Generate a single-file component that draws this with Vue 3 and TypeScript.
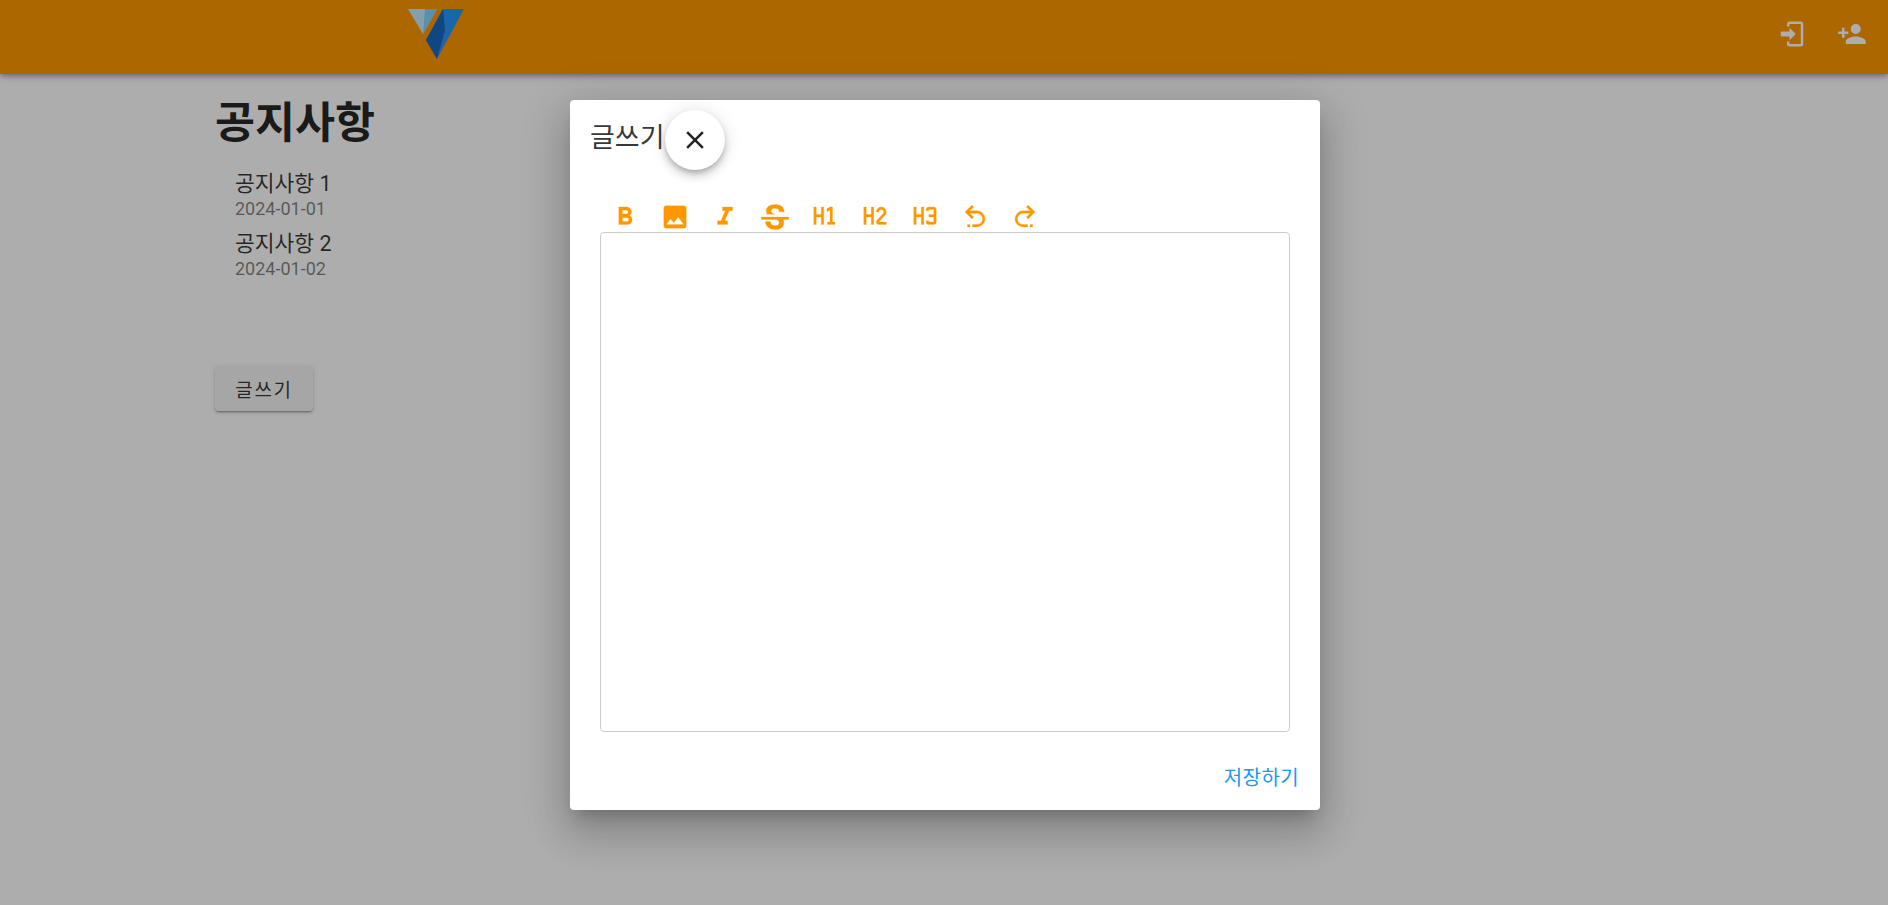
<script setup lang="ts">
interface Notice {
  title: string
  date: string
}

const notices: Notice[] = [
  { title: '공지사항 1', date: '2024-01-01' },
  { title: '공지사항 2', date: '2024-01-02' },
]

const tools: string[] = [
  'M13.5,15.5H10V12.5H13.5A1.5,1.5 0 0,1 15,14A1.5,1.5 0 0,1 13.5,15.5M10,6.5H13A1.5,1.5 0 0,1 14.5,8A1.5,1.5 0 0,1 13,9.5H10M15.6,10.79C16.57,10.11 17.25,9 17.25,8C17.25,5.74 15.5,4 13.25,4H7V18H14.04C16.14,18 17.75,16.3 17.75,14.21C17.75,12.69 16.89,11.39 15.6,10.79Z',
  'M8.5,13.5L11,16.5L14.5,12L19,18H5M21,19V5C21,3.89 20.1,3 19,3H5A2,2 0 0,0 3,5V19A2,2 0 0,0 5,21H19A2,2 0 0,0 21,19Z',
  'M10,4V7H12.21L8.79,15H6V18H14V15H11.79L15.21,7H18V4H10Z',
  'M23,12V14H18.61C19.61,16.14 19.56,22 12.38,22C4.05,22.05 4.37,15.5 4.37,15.5L8.34,15.55C8.37,18.92 11.5,18.92 12.12,18.88C12.76,18.83 15.15,18.84 15.34,16.5C15.42,15.41 14.32,14.58 13.12,14H1V12H23M19.41,7.89L15.43,7.86C15.43,7.86 15.6,5.09 12.15,5.08C8.7,5.06 9,7.28 9,7.56C9.04,7.84 9.34,9.22 12,9.88H5.71C5.71,9.88 2.22,3 10.91,2.11C19.41,1.25 19.44,7.89 19.41,7.89Z',
  'M3,4H5V10H9V4H11V18H9V12H5V18H3V4M14,18V16H16V6.31L13.5,7.75V5.44L16,4H18V16H20V18H14Z',
  'M3,4H5V10H9V4H11V18H9V12H5V18H3V4M21,18H15A2,2 0 0,1 13,16C13,15.47 13.2,15 13.54,14.64L18.41,9.41C18.78,9.05 19,8.55 19,8A2,2 0 0,0 17,6A2,2 0 0,0 15,8H13A4,4 0 0,1 17,4A4,4 0 0,1 21,8C21,9.1 20.55,10.1 19.83,10.83L15,16H21V18Z',
  'M3,4H5V10H9V4H11V18H9V12H5V18H3V4M15,4H19A2,2 0 0,1 21,6V16A2,2 0 0,1 19,18H15A2,2 0 0,1 13,16V15H15V16H19V12H15V10H19V6H15V7H13V6A2,2 0 0,1 15,4Z',
  'M13.5,7A6.5,6.5 0 0,1 20,13.5A6.5,6.5 0 0,1 13.5,20H10V18H13.5C16,18 18,16 18,13.5C18,11 16,9 13.5,9H7.83L10.91,12.09L9.5,13.5L4,8L9.5,2.5L10.92,3.91L7.83,7H13.5M6,18H8V20H6V18Z',
  'M10.5,7A6.5,6.5 0 0,0 4,13.5A6.5,6.5 0 0,0 10.5,20H14V18H10.5C8,18 6,16 6,13.5C6,11 8,9 10.5,9H16.17L13.09,12.09L14.5,13.5L20,8L14.5,2.5L13.08,3.91L16.17,7H10.5M18,18H16V20H18V18Z',
]
</script>

<template>
  <div class="app">
    <header class="app-bar">
      <svg class="logo" viewBox="0 0 58 52" width="58" height="52">
        <polygon points="0,1 29,1 15,26" fill="#c4ecff" />
        <polygon points="17,1 29,1 15,26" fill="#86d4ff" />
        <polygon points="35,1 56,1 29,51 18,32" fill="#2697ff" />
        <polygon points="35,1 18,32 29,51 37,22" fill="#1867c0" />
      </svg>
      <div class="app-bar-actions">
        <button class="bar-btn" type="button">
          <svg viewBox="0 0 24 24" width="30" height="30"><path d="M10,17V14H3V10H10V7L15,12L10,17M10,2H19A2,2 0 0,1 21,4V20A2,2 0 0,1 19,22H10A2,2 0 0,1 8,20V18H10V20H19V4H10V6H8V4A2,2 0 0,1 10,2Z" /></svg>
        </button>
        <button class="bar-btn" type="button">
          <svg viewBox="0 0 24 24" width="30" height="30"><path d="M15,14C12.33,14 7,15.33 7,18V20H23V18C23,15.33 17.67,14 15,14M6,10V7H4V10H1V12H4V15H6V12H9V10M15,12A4,4 0 0,0 19,8A4,4 0 0,0 15,4A4,4 0 0,0 11,8A4,4 0 0,0 15,12Z" /></svg>
        </button>
      </div>
    </header>

    <main class="content">
      <h1 class="page-title">공지사항</h1>
      <ul class="notice-list">
        <li v-for="n in notices" :key="n.date" class="notice-item">
          <div class="notice-title">{{ n.title }}</div>
          <div class="notice-date">{{ n.date }}</div>
        </li>
      </ul>
      <button class="write-btn" type="button">글쓰기</button>
    </main>

    <div class="overlay">
      <section class="dialog">
        <div class="dialog-head">
          <span class="dialog-title">글쓰기</span>
          <button class="close-btn" type="button">
            <svg viewBox="0 0 24 24" width="30" height="30"><path d="M19,6.41L17.59,5L12,10.59L6.41,5L5,6.41L10.59,12L5,17.59L6.41,19L12,13.41L17.59,19L19,17.59L13.41,12L19,6.41Z" /></svg>
          </button>
        </div>
        <div class="editor-wrap">
          <div class="tools">
            <button v-for="(d, i) in tools" :key="i" class="tool-btn" type="button">
              <svg viewBox="0 0 24 24" width="30" height="30"><path :d="d" /></svg>
            </button>
          </div>
          <div class="editor"></div>
        </div>
        <div class="dialog-actions">
          <button class="save-btn" type="button">저장하기</button>
        </div>
      </section>
    </div>
  </div>
</template>

<style>
html,
body {
  margin: 0;
  background: #fff;
  overflow: hidden;
}
</style>

<style scoped>
.app {
  width: 1888px;
  height: 905px;
  position: relative;
  overflow: hidden;
  font-family: Roboto, "Noto Sans CJK KR", sans-serif;
  color: rgba(0, 0, 0, 0.87);
}

button {
  border: 0;
  background: none;
  padding: 0;
  font: inherit;
  color: inherit;
  cursor: pointer;
}

.app-bar {
  height: 74px;
  background: #ff9800;
  display: flex;
  align-items: flex-start;
  padding: 8px 0 0 408px;
  box-sizing: border-box;
  box-shadow: 0 2px 4px -1px rgba(0, 0, 0, 0.2), 0 4px 5px rgba(0, 0, 0, 0.14), 0 1px 10px rgba(0, 0, 0, 0.12);
  position: relative;
}

.app-bar-actions {
  margin-left: auto;
  display: flex;
  gap: 10px;
  padding: 1px 11px 0 0;
}

.bar-btn {
  width: 50px;
  height: 50px;
  display: flex;
  align-items: center;
  justify-content: center;
  fill: #fff;
}

.content {
  padding: 22px 0 0 215px;
}

.page-title {
  margin: 0;
  font-size: 43.5px;
  line-height: 56px;
  font-weight: 700;
}

.notice-list {
  list-style: none;
  margin: 17px 0 0;
  padding: 0 0 0 20px;
}

.notice-item {
  height: 60px;
}

.notice-title {
  font-size: 21.5px;
  line-height: 30px;
  color: rgba(0, 0, 0, 0.78);
}

.notice-date {
  font-size: 18px;
  line-height: 20px;
  color: rgba(0, 0, 0, 0.5);
}

.write-btn {
  display: block;
  margin: 77px 0 0;
  width: 98px;
  height: 45px;
  border-radius: 4px;
  background: #f5f5f5;
  font-size: 19px;
  letter-spacing: 1.7px;
  color: rgba(0, 0, 0, 0.78);
  box-shadow: 0 3px 1px -2px rgba(0, 0, 0, 0.2), 0 2px 2px rgba(0, 0, 0, 0.14), 0 1px 5px rgba(0, 0, 0, 0.12);
}

.overlay {
  position: absolute;
  inset: 0;
  background: rgba(0, 0, 0, 0.32);
  display: flex;
  justify-content: center;
  align-items: flex-start;
  padding: 100px 0 0 2px;
  box-sizing: border-box;
}

.dialog {
  width: 750px;
  height: 710px;
  background: #fff;
  border-radius: 4px;
  box-shadow: 0 11px 15px -7px rgba(0, 0, 0, 0.2), 0 24px 38px 3px rgba(0, 0, 0, 0.14), 0 9px 46px 8px rgba(0, 0, 0, 0.12);
  display: flex;
  flex-direction: column;
}

.dialog-head {
  display: flex;
  align-items: flex-start;
  padding: 10px 0 0 20px;
  height: 82px;
  box-sizing: border-box;
}

.dialog-title {
  font-size: 27px;
  line-height: 32px;
  padding-top: 12px;
  color: rgba(0, 0, 0, 0.8);
}

.close-btn {
  width: 60px;
  height: 60px;
  border-radius: 50%;
  background: #fff;
  display: flex;
  align-items: center;
  justify-content: center;
  fill: #222;
  box-shadow: 0 3px 5px -1px rgba(0, 0, 0, 0.2), 0 6px 10px rgba(0, 0, 0, 0.14), 0 1px 18px rgba(0, 0, 0, 0.12);
}

.editor-wrap {
  padding: 0 30px;
}

.tools {
  display: flex;
  height: 50px;
  align-items: flex-end;
}

.tool-btn {
  width: 50px;
  height: 30px;
  display: flex;
  align-items: center;
  justify-content: center;
  fill: #ff9800;
  stroke: #ff9800;
  stroke-width: 0.2;
}

.editor {
  height: 500px;
  border: 1px solid #ccc;
  border-radius: 4px;
  box-sizing: border-box;
}

.dialog-actions {
  display: flex;
  justify-content: flex-end;
  padding: 29px 21px 0 0;
}

.save-btn {
  font-size: 20px;
  line-height: 34px;
  letter-spacing: 0.4px;
  color: #2196f3;
}
</style>
